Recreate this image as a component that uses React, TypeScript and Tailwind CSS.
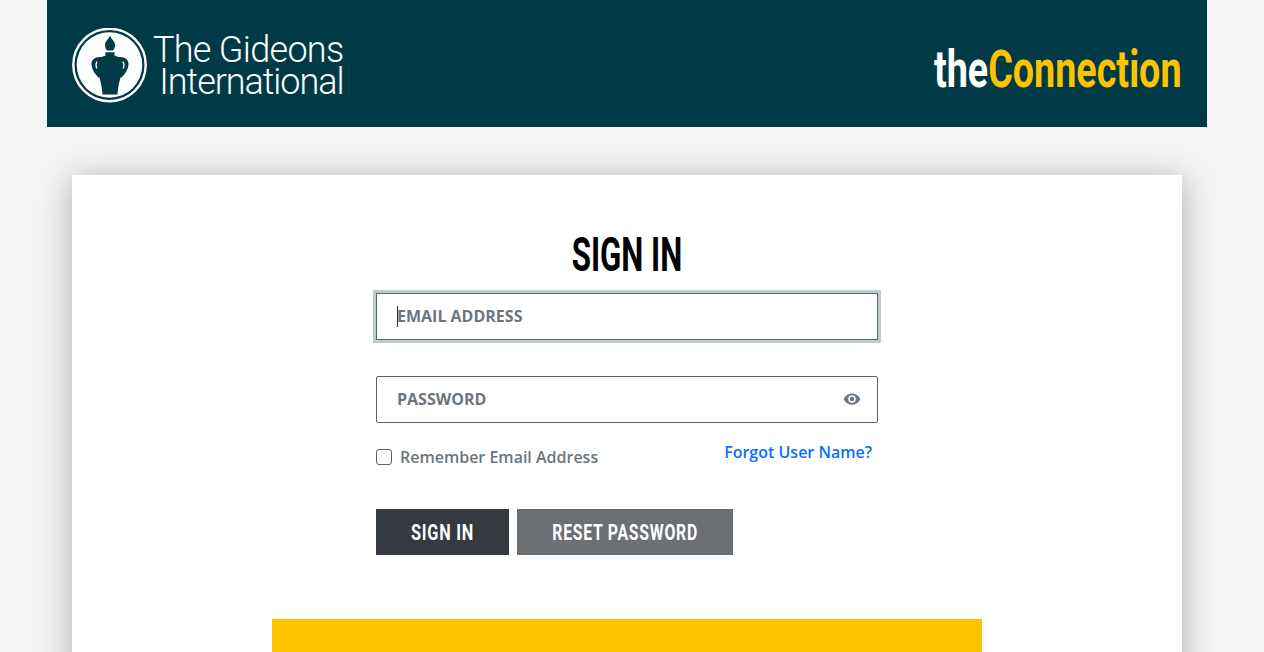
import React from "react";

const din = "font-['Roboto','Liberation_Sans',sans-serif] font-bold";

function Logo() {
  return (
    <svg width="75" height="75" viewBox="72 28 75 75" className="mt-[3px] shrink-0">
      <circle cx="109.5" cy="65" r="36.2" fill="none" stroke="#fff" strokeWidth="2.4" />
      <circle cx="109.500" cy="65" r="32.8" fill="#fff" />
      <g fill="#003a47">
        <path d="M110 35.500C111 39 115 41 115 45C115 47.500 114 49.500 113 50.500H107C106 49.500 105 47.500 105 45C105 41 109 39 110 35.500Z" />
        <path d="M105.500 52.300H114.500V55.500C118 56.500 122.500 58.500 124 63C124 71 118.500 78 117.500 94.500H102.500C101.500 78 96 71 96 63C97.500 58.500 102 56.500 105.500 55.500Z" />
        <path d="M102 57C94.500 56.500 91 60 91.500 65C92 70 95 74 99 78L102 73C99 70 98 66 100 62Z" />
        <path d="M118 57C125.500 56.500 129 60 128.500 65C128 70 125 74 121 78L118 73C121 70 122 66 120 62Z" />
      </g>
      <path d="M97 61.500C95.800 63.500 95.800 66 96.800 68.500" fill="none" stroke="#fff" strokeWidth="1.300" />
      <path d="M123 61.500C124.200 63.500 124.200 66 123.200 68.500" fill="none" stroke="#fff" strokeWidth="1.300" />
    </svg>
  );
}

export default function App() {
  return (
    <div className="h-screen overflow-hidden bg-[#f4f4f4] pr-[10px] font-['Open_Sans',sans-serif]">
      <div className="mx-auto w-[1160px]">
        <header className="flex h-[127px] items-center justify-between bg-[#003a47] px-[25px]">
          <div className="flex items-center gap-[6px]">
            <Logo />
            <div className="flex flex-col items-end pt-[5px] font-['Roboto',sans-serif] text-[36px] leading-[32px] font-[350] text-white">
              <span className="tracking-[-0.7px]">The Gideons</span>
              <span className="tracking-[-1.05px]">International</span>
            </div>
          </div>
          <div className={`${din} origin-right scale-x-[0.725] whitespace-nowrap pt-[13px] text-[52px] leading-none text-[#fdc300]`}>
            <span className="text-white">the</span>Connection
          </div>
        </header>
        <main className="mx-[25px] mt-12 h-[600px] bg-white shadow-[0_5px_30px_rgba(0,0,0,0.3)]">
          <div className="flex justify-center pt-[52px]">
            <h1 className={`${din} scale-x-[0.65] text-[48px] leading-[56px] text-black`}>SIGN IN</h1>
          </div>
          <form className="mx-auto mt-[10px] w-[502px]">
            <div className="relative">
              <input
                placeholder="EMAIL ADDRESS"
                className="block h-[47px] w-full border border-[#5f6368] pb-[2px] pl-[20px] text-[16px] font-bold outline-none shadow-[0_0_0_3px_#bccccf] placeholder:text-[#6c757d]"
              />
              <span className="absolute left-[21px] top-[13px] h-[21px] w-px bg-[#003a47]" />
            </div>
            <div className="relative mt-[36px]">
              <input
                placeholder="PASSWORD"
                className="block h-[47px] w-full rounded-[2px] border border-[#5f6368] pb-[2px] pl-[20px] pr-10 text-[16px] font-bold outline-none placeholder:text-[#6c757d]"
              />
              <svg viewBox="0 0 24 24" width="18" height="18" className="absolute right-[17px] top-[14px]" fill="#6b7785">
                <path d="M12 4.500C7 4.500 2.700 7.600 1 12c1.700 4.400 6 7.500 11 7.500s9.300-3.100 11-7.500c-1.700-4.400-6-7.500-11-7.500zM12 17a5 5 0 1 1 0-10 5 5 0 0 1 0 10zm0-8a3 3 0 1 0 0 6 3 3 0 0 0 0-6z" />
              </svg>
            </div>
            <div className="mt-[18px] flex items-start justify-between pr-[6px]">
              <label className="flex items-center pt-[5px] text-[16px] font-semibold leading-[22px] text-[#6c757d]">
                <span className="mr-2 h-4 w-4 rounded-[3px] border border-[#5f6368] bg-white" />
                Remember Email Address
              </label>
              <a className="text-[16px] font-semibold leading-[22px] text-[#0d6efd]">Forgot User Name?</a>
            </div>
            <div className="mt-[41px] flex gap-2">
              <button type="button" className="flex h-[46px] w-[133px] items-center justify-center bg-[#343a40]">
                <span className={`${din} scale-x-[0.74] text-[22px] tracking-[1px] text-white`}>SIGN IN</span>
              </button>
              <button type="button" className="flex h-[46px] w-[216px] items-center justify-center bg-[#6c7075]">
                <span className={`${din} scale-x-[0.72] whitespace-nowrap text-[22px] tracking-[1px] text-white`}>RESET PASSWORD</span>
              </button>
            </div>
          </form>
          <div className="mx-auto mt-[64px] h-[100px] w-[710px] bg-[#fdc300]" />
        </main>
      </div>
    </div>
  );
}
